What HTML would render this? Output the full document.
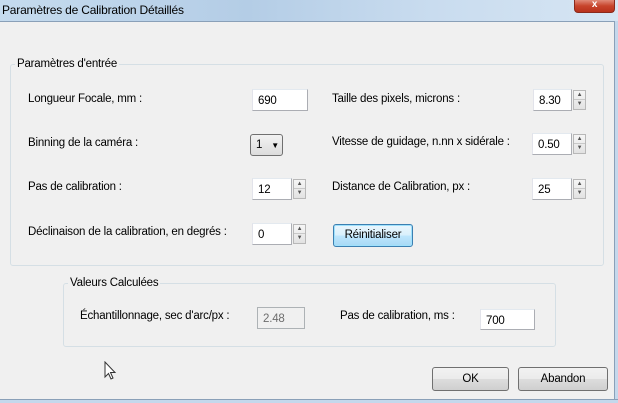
<!DOCTYPE html>
<html><head><meta charset="utf-8"><style>
*{margin:0;padding:0;box-sizing:border-box}
body{width:618px;height:403px;background:#f0f0f0;position:relative;overflow:hidden;font-family:"Liberation Sans",sans-serif;font-size:11.5px;color:#000;letter-spacing:-0.2px}
.a{position:absolute;white-space:nowrap}
.t{position:absolute;white-space:nowrap;line-height:14px}
.in{position:absolute;background:#fff;border:1px solid #abadb3;border-top-color:#e3e9ef;border-left-color:#e2e3ea;padding:5px 0 0 5px;line-height:12px}
.sp{position:absolute;width:13px;border:1px solid #b8b8b8;background:linear-gradient(#f6f6f6,#e2e2e2)}
.sp div{height:50%;border-bottom:1px solid #c8c8c8;font-size:6px;line-height:9px;text-align:center;color:#555}
.grp{position:absolute;border:1px solid #d5dfe5;border-radius:3px}
.btn{position:absolute;border:1px solid #707070;border-radius:3px;background:linear-gradient(#f2f2f2 0%,#ebebeb 50%,#dddddd 51%,#cfcfcf 100%);text-align:center}
</style></head><body>
<div class="a" style="left:0;top:0;width:618px;height:21px;background:linear-gradient(90deg,#c5dbee,#b4cde6 40%,#c9dcef 70%,#d6e5f3)"></div>
<div class="t" style="left:2px;top:3px;font-size:12px">Paramètres de Calibration Détaillés</div>
<div class="a" style="left:574px;top:0;width:41px;height:13px;background:linear-gradient(#e08a78,#c7432b 50%,#b8321c);border:1px solid #8a2a1c;border-top:none;border-radius:0 0 4px 4px;color:#fff;font-size:10px;text-align:center;line-height:9px;font-weight:bold">x</div>
<div class="a" style="left:0;top:21px;width:618px;height:1px;background:#8aa0b8"></div>
<div class="a" style="left:614px;top:21px;width:4px;height:382px;background:#c4d8ec;border-left:1px solid #8aa0b8"></div>
<div class="a" style="left:0;top:399px;width:618px;height:4px;background:#c4d8ec;border-top:1px solid #8aa0b8"></div>

<div class="grp" style="left:10px;top:64px;width:594px;height:202px"></div>
<div class="t" style="left:15px;top:57px;background:#f0f0f0;padding:0 2px">Paramètres d'entrée</div>

<div class="t" style="left:28px;top:92px">Longueur Focale, mm :</div>
<div class="in" style="left:252px;top:89px;width:56px;height:22px">690</div>
<div class="t" style="left:332px;top:92px">Taille des pixels, microns :</div>
<div class="in" style="left:533px;top:89px;width:39px;height:22px">8.30</div>
<div class="sp" style="left:573px;top:90px;height:20px"><div>▲</div><div style="border:none">▼</div></div>

<div class="t" style="left:28px;top:136px">Binning de la caméra :</div>
<div class="a" style="left:250px;top:134px;width:33px;height:22px;border:1px solid #707070;border-radius:3px;background:linear-gradient(#f2f2f2,#dcdcdc);padding:4px 0 0 5px">1 <span style="font-size:8px;margin-left:6px">▼</span></div>
<div class="t" style="left:332px;top:135px">Vitesse de guidage, n.nn x sidérale :</div>
<div class="in" style="left:532px;top:133px;width:40px;height:22px">0.50</div>
<div class="sp" style="left:573px;top:134px;height:20px"><div>▲</div><div style="border:none">▼</div></div>

<div class="t" style="left:28px;top:180px">Pas de calibration :</div>
<div class="in" style="left:252px;top:178px;width:40px;height:22px">12</div>
<div class="sp" style="left:293px;top:179px;height:20px"><div>▲</div><div style="border:none">▼</div></div>
<div class="t" style="left:332px;top:180px">Distance de Calibration, px :</div>
<div class="in" style="left:532px;top:178px;width:40px;height:22px">25</div>
<div class="sp" style="left:573px;top:179px;height:20px"><div>▲</div><div style="border:none">▼</div></div>

<div class="t" style="left:28px;top:225px">Déclinaison de la calibration, en degrés :</div>
<div class="in" style="left:252px;top:223px;width:40px;height:22px">0</div>
<div class="sp" style="left:293px;top:224px;height:20px"><div>▲</div><div style="border:none">▼</div></div>
<div class="btn" style="left:333px;top:224px;width:80px;height:23px;line-height:20px;border-color:#3c7fb1;background:linear-gradient(#eaf6fd,#d9f0fc 50%,#bee6fd 51%,#a7d9f5);box-shadow:inset 0 0 0 1px #9fe1fc">Réinitialiser</div>

<div class="grp" style="left:63px;top:283px;width:493px;height:64px"></div>
<div class="t" style="left:68px;top:276px;background:#f0f0f0;padding:0 2px">Valeurs Calculées</div>
<div class="t" style="left:80px;top:309px">Échantillonnage, sec d'arc/px :</div>
<div class="in" style="left:257px;top:307px;width:48px;height:22px;color:#6d6d6d;background:#f0f0f0;border-color:#adb2b5">2.48</div>
<div class="t" style="left:340px;top:309px">Pas de calibration, ms :</div>
<div class="in" style="left:480px;top:309px;width:55px;height:21px">700</div>

<svg class="a" style="left:104px;top:361px" width="14" height="20" viewBox="0 0 14 20"><path d="M1 1 L1 16 L4.5 12.5 L7 18 L9 17 L6.5 11.5 L11 11.5 Z" fill="#fff" stroke="#333" stroke-width="1"/></svg>

<div class="btn" style="left:432px;top:367px;width:77px;height:24px;line-height:22px">OK</div>
<div class="btn" style="left:518px;top:367px;width:90px;height:24px;line-height:22px">Abandon</div>
</body></html>
